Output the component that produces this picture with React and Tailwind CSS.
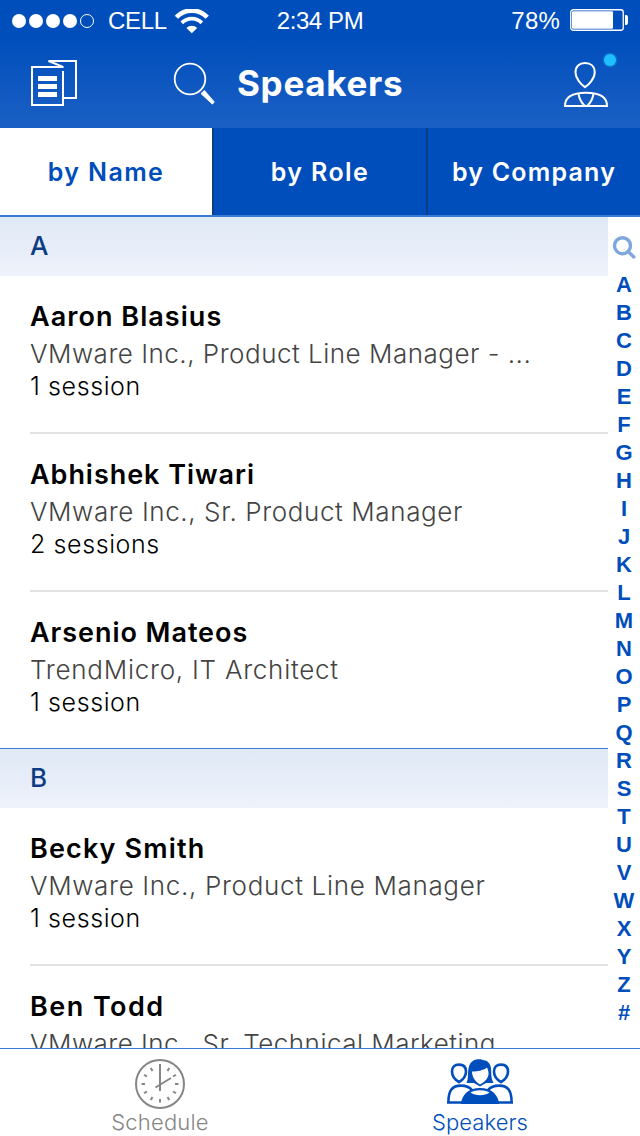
import React from "react";

const sections = [
  {
    letter: "A",
    people: [
      { name: "Aaron Blasius", nameSpacing: "tracking-[1.05px]", role: "VMware Inc., Product Line Manager - ...", roleSpacing: "tracking-[0.5px]", sessions: "1 session" },
      { name: "Abhishek Tiwari", nameSpacing: "tracking-[0.95px]", role: "VMware Inc., Sr. Product Manager", roleSpacing: "tracking-[0.6px]", sessions: "2 sessions" },
      { name: "Arsenio Mateos", nameSpacing: "tracking-[0.95px]", role: "TrendMicro, IT Architect", roleSpacing: "tracking-[0.75px]", sessions: "1 session" },
    ],
  },
  {
    letter: "B",
    people: [
      { name: "Becky Smith", nameSpacing: "tracking-[1.15px]", role: "VMware Inc., Product Line Manager", roleSpacing: "tracking-[0.67px]", sessions: "1 session" },
      { name: "Ben Todd", nameSpacing: "tracking-[1.45px]", role: "VMware Inc., Sr. Technical Marketing", roleSpacing: "tracking-[0.48px]", sessions: "1 session" },
    ],
  },
];

const indexLetters = "ABCDEFGHIJKLMNOPQRSTUVWXYZ#".split("");

function StatusBar() {
  return (
    <div className="grid h-10 grid-cols-3 items-center font-['Liberation_Sans',sans-serif] text-[24px] leading-[42px] text-white">
      <div className="flex items-center pl-3">
        <svg width="84" height="16" viewBox="0 0 84 16">
          <circle cx="7" cy="8" r="7" fill="#fff" />
          <circle cx="24" cy="8" r="7" fill="#fff" />
          <circle cx="41" cy="8" r="7" fill="#fff" />
          <circle cx="58" cy="8" r="7" fill="#fff" />
          <circle cx="75" cy="8" r="6.5" fill="none" stroke="#fff" />
        </svg>
        <span className="ml-3 w-[66px] tracking-[-0.3px]">CELL</span>
        <svg width="36" height="25" viewBox="0 0 36 25" fill="none" stroke="#fff">
          <path d="M2.4 8.3a21 21 0 0 1 30.8 0" strokeWidth="4.6" />
          <path d="M7.8 13.8a14 14 0 0 1 20 0" strokeWidth="3.8" />
          <path d="M17.8 24.3l-5.4-5.4a7.6 7.6 0 0 1 10.8 0z" fill="#fff" stroke="none" />
        </svg>
      </div>
      <div className="text-center tracking-[-0.4px]">2:34 PM</div>
      <div className="flex items-center justify-end pr-3">
        <span className="tracking-[0.2px]">78%</span>
        <svg className="mb-0.5 ml-2.5" width="58" height="22" viewBox="0 0 58 22">
          <rect x="0.75" y="0.75" width="52.5" height="20.5" rx="2.5" fill="none" stroke="#fff" strokeWidth="1.3" />
          <rect x="2" y="2.2" width="41" height="17.6" rx="1" fill="#fff" />
          <path d="M55 6h1.2q1.8 0 1.8 2v6q0 2-1.8 2H55z" fill="#fff" />
        </svg>
      </div>
    </div>
  );
}

function TitleBar() {
  return (
    <div className="flex h-22 items-start text-white">
      <svg className="mt-5 ml-[31px] shrink-0" width="46" height="46" viewBox="0 0 46 46" fill="none" stroke="#fff" strokeWidth="2">
        <path d="M32.6 7H1v38h31V11" />
        <path d="M32 38h13V1H17.5l14 5.6" />
        <path d="M7 18.5h19M7 26.5h19M7 34.5h19" strokeWidth="5" />
      </svg>
      <svg className="mt-[22px] ml-24 shrink-0" width="43" height="44" viewBox="0 0 43 44" fill="none" stroke="#fff">
        <circle cx="17" cy="17" r="15.3" strokeWidth="1.8" />
        <path d="M28 31.6l3.4-3.1 9.8 11.4-1.8 2.2z" fill="#fff" strokeWidth="1" strokeLinejoin="round" />
      </svg>
      <h1 className="mt-[21px] ml-[21px] w-[200px] font-['Inter',sans-serif] text-[35px] leading-[44px] font-bold tracking-[0.7px]">Speakers</h1>
      <svg className="mt-2 ml-[127px] shrink-0 overflow-visible" width="53" height="60" viewBox="0 0 53 60" fill="none" stroke="#fff" strokeWidth="2">
        <path d="M21 39.2c-3.800-2.600-9.500-8.700-9.500-14.800 0-6.200 3.800-9.300 9.500-9.300s9.700 3.100 9.700 9.300c0 6.100-5.800 12.200-9.700 14.800z" />
        <path d="M1 58h42c0-7.500-6-13.200-21-13.200S1 50.500 1 58z" />
        <path d="M14.500 46c1 5.500 3.500 9.500 6.500 12M29.500 46c-1 5.500-3.500 9.500-6.500 12" />
        <circle cx="46" cy="12" r="7.500" fill="#20bfff" opacity="0.25" stroke="none" />
        <circle cx="46" cy="12" r="6" fill="#20bfff" stroke="none" />
      </svg>
    </div>
  );
}

function Tabs() {
  return (
    <div className="grid h-[89px] shrink-0 grid-cols-[212px_214px_214px] grid-rows-[87px] border-b-2 border-[#3c7bd4] bg-[#004ebc] text-center font-['Inter',sans-serif] text-[25px] leading-[89px] font-semibold text-white">
      <div className="overflow-hidden bg-white text-[#004ebc]"><span className="tracking-[1.4px]">by Name</span></div>
      <div className="overflow-hidden border-l-2 border-[#0c3c84]"><span className="tracking-[1.4px]">by Role</span></div>
      <div className="overflow-hidden border-l-2 border-[#0c3c84]"><span className="tracking-[1.2px]">by Company</span></div>
    </div>
  );
}

function Person({ person }) {
  return (
    <li className="ml-[30px] h-[158px] border-b-2 border-[#e2e2e2] pt-[22px] whitespace-nowrap last:h-[156px] last:border-b-0">
      <div className={`text-[27px] leading-[38px] font-semibold ${person.nameSpacing}`}>{person.name}</div>
      <div className={`text-[26px] leading-9 font-light text-[#444] ${person.roleSpacing}`}>{person.role}</div>
      <div className="text-[25px] leading-7 font-light tracking-[0.6px]">{person.sessions}</div>
    </li>
  );
}

function SearchIcon() {
  return (
    <svg width="24" height="24" viewBox="0 0 24 24" fill="none" stroke="#7fa6dd" strokeWidth="3.400">
      <circle cx="10.500" cy="9.700" r="8" />
      <path d="M16.300 15.700l5.500 5.200" strokeLinecap="round" />
    </svg>
  );
}

function ClockIcon() {
  const ticks = [30, 60, 90, 120, 150, 180, 210, 240, 270, 300, 330];
  return (
    <svg width="50" height="50" viewBox="0 0 50 50" fill="none" stroke="#868686" strokeWidth="2">
      <circle cx="25" cy="25" r="24" />
      {ticks.map((a) => (
        <path key={a} d="M25 6.500v3.500" transform={`rotate(${a} 25 25)`} />
      ))}
      <path d="M25 5v27M20.500 28.500L36 19" />
    </svg>
  );
}

function SpeakersIcon() {
  return (
    <svg width="66" height="46" viewBox="0 0 66 46" fill="none" stroke="#004ebc" strokeWidth="2.600">
      <path d="M12 23c-3.500-2-7-5.500-7-10.500C5 8 7.500 5.600 12 5.600s7 2.400 7 6.900c0 5-3.500 8.500-7 10.500z" />
      <path d="M54 23c-3.500-2-7-5.500-7-10.500 0-4.500 2.500-6.900 7-6.900s7 2.400 7 6.900c0 5-3.500 8.500-7 10.500z" />
      <path d="M1.400 43.500C1.400 31.500 5 26.600 14 26.600c5 0 8.500 1.400 11 4.400M64.600 43.500c0-12-3.600-16.900-12.600-16.900-5 0-8.500 1.400-11 4.400M0 43.500h18M48 43.500h18" />
      <path d="M19.500 24c2.500-5 .5-12 3-18C24.500 1.500 28.500.3 32 .3c2 0 3 .4 4 .8 6 .6 8.200 4.900 8.200 10.900 0 5 .3 8.500 2.300 12H39l-6 3.500-6-3.500z" fill="#004ebc" stroke="none" />
      <path d="M25 12.500c6.500 0 12-1.500 15-4 1 2.500 2.500 5.500.8 9.500-1.500 3.500-5 6-7.800 7.500-2.800-1.500-8-6-8-13z" fill="#fff" stroke="none" />
      <path d="M14 45c.5-8.500 7-16 19-16s18.500 7.500 19 16z" fill="#004ebc" stroke="none" />
      <path d="M23.500 33.500c2.500-1.500 6-2.200 9.500-2.200s7 .7 9.500 2.200c-2.500 1.800-6 2.700-9.500 2.700s-7-.9-9.500-2.700z" fill="#fff" stroke="none" />
    </svg>
  );
}

function TabBar() {
  return (
    <nav className="grid h-22 shrink-0 grid-cols-2 border-t border-[#3c7bd4] bg-white font-['Inter',sans-serif] text-[22px] leading-[26px] font-light">
      <div className="flex flex-col items-center pt-[10px] text-[#868686]">
        <ClockIcon />
        <span className="tracking-[0.2px]">Schedule</span>
      </div>
      <div className="flex flex-col items-center pt-[10px] text-[#004ebc]">
        <div className="h-[50px]"><SpeakersIcon /></div>
        <span className="tracking-[0.1px]">Speakers</span>
      </div>
    </nav>
  );
}

export default function App() {
  return (
    <div className="flex h-[1136px] w-[640px] flex-col overflow-hidden bg-white">
      <header className="h-32 shrink-0 bg-linear-to-b from-[#004ebc] from-30% to-[#1a60c4]">
        <StatusBar />
        <TitleBar />
      </header>
      <Tabs />
      <main className="flex min-h-0 flex-1 overflow-hidden font-['Inter',sans-serif]">
        <div className="w-[608px]">
          {sections.map((s) => (
            <section key={s.letter} className="group">
              <h2 className="h-[59px] bg-linear-to-b from-[#e0e9f6] to-[#eef2fb] pl-[30px] text-[26px] leading-[57px] font-medium text-[#0c3c84] group-last:h-[60px] group-last:border-t group-last:border-[#3c7bd4]">
                {s.letter}
              </h2>
              <ul>
                {s.people.map((p) => (
                  <Person key={p.name} person={p} />
                ))}
              </ul>
            </section>
          ))}
        </div>
        <aside className="flex w-8 flex-col items-center pt-[19px] font-['Liberation_Sans',sans-serif] text-[22px] leading-7 font-bold text-[#004ebc]">
          <div className="mb-[7px] h-7"><SearchIcon /></div>
          {indexLetters.map((l) => (
            <span key={l}>{l}</span>
          ))}
        </aside>
      </main>
      <TabBar />
    </div>
  );
}
